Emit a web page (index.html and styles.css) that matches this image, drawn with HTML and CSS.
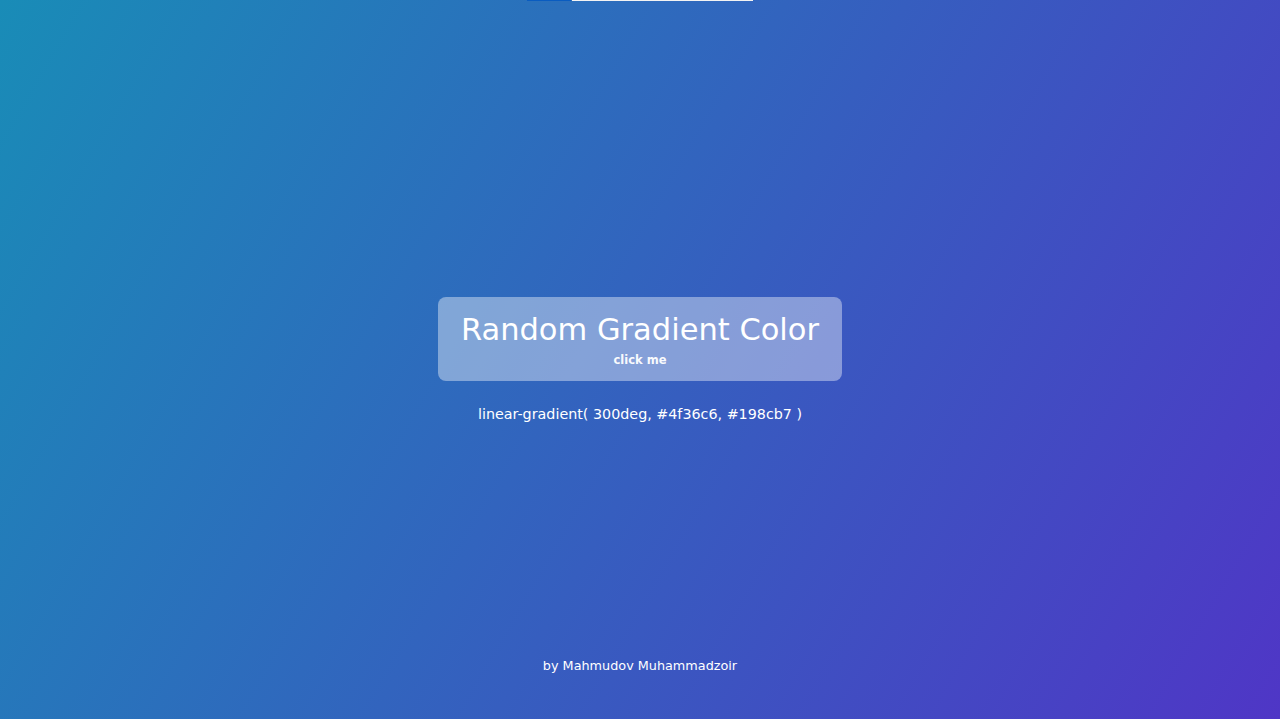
FILE: index.html
```html
<!DOCTYPE html>
<html lang="en">
<head>
<meta charset="utf-8">
<title>Random Gradient Color</title>
<link rel="stylesheet" href="styles.css">
</head>
<body>
<div class="page">
  <div class="top">
    <div class="topbar">
      <span class="bar-blue"></span>
      <span class="bar-white"></span>
    </div>
  </div>
  <main class="center">
    <button class="gen">
      <span class="gen-title">Random Gradient Color</span>
      <span class="gen-sub">click me</span>
    </button>
    <p class="code">linear-gradient( 300deg, #4f36c6, #198cb7 )</p>
  </main>
  <div class="bottom">
    <p class="author">by Mahmudov Muhammadzoir</p>
  </div>
</div>
</body>
</html>
```
FILE: styles.css
```css
* { box-sizing: border-box; }
html, body { margin: 0; padding: 0; height: 100%; }
body {
  font-family: "DejaVu Sans", "Noto Sans", sans-serif;
  color: #fff;
  background: linear-gradient(300deg, #4f36c6, #198cb7);
  overflow: hidden;
}
.page {
  height: 100vh;
  display: grid;
  grid-template-rows: 1fr auto 1fr;
}
.top { display: flex; justify-content: center; align-items: flex-start; }
.topbar { display: flex; height: 1px; }
.bar-blue { width: 44px; height: 1px; background: #0a5cc0; }
.bar-white { width: 181px; height: 1px; background: #f3f3f3; margin-left: 1px; }
.center { display: flex; flex-direction: column; align-items: center; padding-top: 2px; }
.gen {
  display: flex; flex-direction: column; align-items: center;
  width: 404px; height: 84px;
  padding: 15px 0 0;
  border: none; border-radius: 8px;
  background: rgba(255,255,255,0.4);
  color: #fff; font-family: inherit; cursor: pointer;
}
.gen-title { font-size: 30.5px; line-height: 36px; }
.gen-sub { font-size: 11.5px; line-height: 16px; font-weight: 700; margin-top: 4px; opacity: 0.95; }
.code { margin: 23px 0 0; font-size: 14.3px; line-height: 20px; }
.bottom { display: flex; align-items: flex-end; justify-content: center; }
.author { margin: 0 0 45px; font-size: 12.8px; line-height: 16px; }
```
